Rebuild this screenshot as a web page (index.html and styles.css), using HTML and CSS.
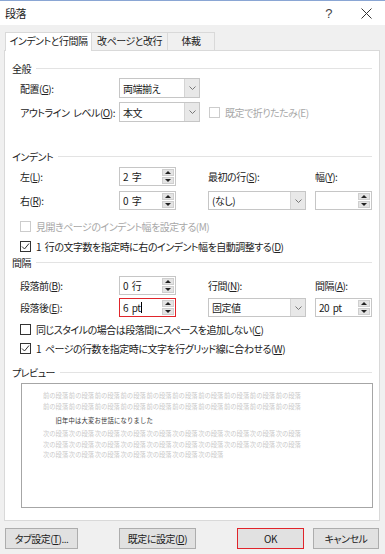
FILE: index.html
```html
<!DOCTYPE html>
<html lang="ja">
<head>
  <meta charset="UTF-8">
  <title>段落</title>
  <link rel="stylesheet" href="styles.css">
</head>
<body>
  <div class="dialog">
    <!-- Title bar -->
    <div class="titlebar">
      <span class="title">段落</span>
      <div class="title-btns">
        <span class="help">?</span>
        <svg class="close" width="11" height="11" viewBox="0 0 11 11"><path d="M0.5 0.5 L10.5 10.5 M10.5 0.5 L0.5 10.5" stroke="#333" stroke-width="1"/></svg>
      </div>
    </div>

    <!-- Tabs -->
    <div class="tabs">
      <div class="tab active">インデントと行間隔</div>
      <div class="tab">改ページと改行</div>
      <div class="tab">体裁</div>
    </div>

    <div class="panel">
      <!-- General -->
      <div class="group-title first"><span>全般</span></div>
      <div class="general">
        <span class="label">配置(<u>G</u>):</span>
        <div class="select short"><span class="value">両端揃え</span><span class="drop"><svg width="7" height="4" viewBox="0 0 7 4"><path d="M0.5 0.5 L3.5 3.5 L6.5 0.5" fill="none" stroke="#777"/></svg></span></div>
        <span></span>
        <span class="label">アウトライン レベル(<u>O</u>):</span>
        <div class="select short"><span class="value">本文</span><span class="drop"><svg width="7" height="4" viewBox="0 0 7 4"><path d="M0.5 0.5 L3.5 3.5 L6.5 0.5" fill="none" stroke="#777"/></svg></span></div>
        <label class="check disabled inline"><span class="box"></span><span>既定で折りたたみ(E)</span></label>
      </div>

      <!-- Indent -->
      <div class="group-title indent-title"><span>インデント</span></div>
      <div class="grid4">
        <span class="label">左(<u>L</u>):</span>
        <div class="spin"><span class="value">2 字</span><span class="arrows"><i class="up"></i><i class="down"></i></span></div>
        <span class="label">最初の行(<u>S</u>):</span>
        <span class="label">幅(<u>Y</u>):</span>

        <span class="label">右(<u>R</u>):</span>
        <div class="spin"><span class="value">0 字</span><span class="arrows"><i class="up"></i><i class="down"></i></span></div>
        <div class="select wide"><span class="value">(なし)</span><span class="drop"><svg width="7" height="4" viewBox="0 0 7 4"><path d="M0.5 0.5 L3.5 3.5 L6.5 0.5" fill="none" stroke="#777"/></svg></span></div>
        <div class="spin"><span class="value"></span><span class="arrows"><i class="up"></i><i class="down"></i></span></div>
      </div>
      <div class="checks indent-checks">
        <label class="check disabled"><span class="box"></span><span>見開きページのインデント幅を設定する(M)</span></label>
        <label class="check"><span class="box checked"><svg width="9" height="9" viewBox="0 0 9 9"><path d="M1 4.5 L3.5 7 L8 1.5" fill="none" stroke="#333" stroke-width="1"/></svg></span><span>1 行の文字数を指定時に右のインデント幅を自動調整する(<u>D</u>)</span></label>
      </div>

      <!-- Spacing -->
      <div class="group-title spacing-title"><span>間隔</span></div>
      <div class="grid4 spacing">
        <span class="label">段落前(<u>B</u>):</span>
        <div class="spin"><span class="value">0 行</span><span class="arrows"><i class="up"></i><i class="down"></i></span></div>
        <span class="label">行間(<u>N</u>):</span>
        <span class="label">間隔(<u>A</u>):</span>

        <span class="label">段落後(<u>E</u>):</span>
        <div class="spin focus"><span class="value">6 pt<span class="caret"></span></span><span class="arrows"><i class="up"></i><i class="down"></i></span></div>
        <div class="select wide"><span class="value">固定値</span><span class="drop"><svg width="7" height="4" viewBox="0 0 7 4"><path d="M0.5 0.5 L3.5 3.5 L6.5 0.5" fill="none" stroke="#777"/></svg></span></div>
        <div class="spin"><span class="value">20 pt</span><span class="arrows"><i class="up"></i><i class="down"></i></span></div>
      </div>
      <div class="checks spacing-checks">
        <label class="check"><span class="box"></span><span>同じスタイルの場合は段落間にスペースを追加しない(<u>C</u>)</span></label>
        <label class="check"><span class="box checked"><svg width="9" height="9" viewBox="0 0 9 9"><path d="M1 4.5 L3.5 7 L8 1.5" fill="none" stroke="#333" stroke-width="1"/></svg></span><span>1 ページの行数を指定時に文字を行グリッド線に合わせる(<u>W</u>)</span></label>
      </div>

      <!-- Preview -->
      <div class="group-title preview-title"><span>プレビュー</span></div>
      <div class="preview">
        <div class="preview-text">
          <p class="ghost">前の段落 前の段落 前の段落 前の段落 前の段落 前の段落 前の段落 前の段落 前の段落 前の段落</p>
          <p class="ghost">前の段落 前の段落 前の段落 前の段落 前の段落 前の段落 前の段落 前の段落 前の段落 前の段落</p>
          <p class="main">旧年中は大変お世話になりました</p>
          <p class="ghost">次の段落 次の段落 次の段落 次の段落 次の段落 次の段落 次の段落 次の段落 次の段落 次の段落</p>
          <p class="ghost">次の段落 次の段落 次の段落 次の段落 次の段落 次の段落 次の段落 次の段落 次の段落 次の段落</p>
          <p class="ghost">次の段落 次の段落 次の段落 次の段落 次の段落 次の段落 次の段落</p>
        </div>
      </div>
    </div>

    <!-- Buttons -->
    <div class="buttons">
      <button class="btn tab-btn">タブ設定(<u>T</u>)...</button>
      <button class="btn default-btn">既定に設定(<u>D</u>)</button>
      <button class="btn ok-btn">OK</button>
      <button class="btn cancel-btn">キャンセル</button>
    </div>
  </div>
</body>
</html>
```

FILE: styles.css
```css
* {
  margin: 0;
  padding: 0;
  box-sizing: border-box;
}

body {
  width: 385px;
  height: 554px;
  overflow: hidden;
  background: #f0f0f0;
  font-family: "Noto Sans CJK JP", "Noto Sans", sans-serif;
  font-feature-settings: "palt";
  font-size: 10px;
  letter-spacing: -0.5px;
  word-spacing: 2px;
  color: #222;
}

u {
  text-decoration: underline;
  text-underline-offset: 1px;
}

.dialog {
  width: 385px;
  height: 554px;
  border-top: 1px solid #8aa6d4;
  background: #f0f0f0;
}

/* Title bar */
.titlebar {
  height: 24px;
  background: #fff;
  display: flex;
  align-items: center;
  justify-content: space-between;
  padding: 0 13px 0 5px;
}

.title {
  font-size: 11px;
}

.title-btns {
  display: flex;
  align-items: center;
  gap: 29px;
}

.help {
  font-family: "Liberation Sans", sans-serif;
  font-size: 13px;
  color: #444;
}

/* Tabs */
.tabs {
  display: flex;
  margin-top: 6px;
  padding-left: 5px;
  height: 19px;
  align-items: flex-end;
}

.tab {
  height: 18px;
  line-height: 16px;
  border: 1px solid #d9d9d9;
  border-bottom: none;
  border-left: none;
  text-align: center;
  white-space: nowrap;
  background: #f0f0f0;
}

.tab.active {
  height: 19px;
  background: #fff;
  border-left: 1px solid #d9d9d9;
  width: 87px;
  margin-bottom: -1px;
  position: relative;
}

.tab:nth-child(2) {
  width: 76px;
}

.tab:nth-child(3) {
  width: 47px;
}

/* Panel */
.panel {
  margin: 0 5px 0 4px;
  height: 471px;
  background: #fff;
  border: 1px solid #d9d9d9;
  padding: 10px 7px 0 15px;
  display: flex;
  flex-direction: column;
}

.group-title {
  display: flex;
  align-items: center;
  height: 14px;
  margin-left: -8px;
}

.group-title::after {
  content: "";
  flex: 1;
  height: 1px;
  background: #e3e3e3;
  margin-left: 5px;
}

.indent-title {
  margin-top: 27px;
}

.spacing-title {
  margin-top: 1px;
}

.preview-title {
  margin-top: 9px;
}

.label {
  align-self: center;
  white-space: nowrap;
}

/* General rows */
.general {
  display: grid;
  grid-template-columns: 99px 81px auto;
  grid-auto-rows: 20px;
  row-gap: 4px;
  margin-top: 3px;
}

/* Four column rows */
.grid4 {
  display: grid;
  grid-template-columns: 99px 89px 107px 57px;
  grid-auto-rows: 19px;
  row-gap: 5px;
  margin-top: 4px;
}

.spacing {
  margin-top: 7px;
  row-gap: 3px;
}

/* Controls */
.select {
  display: flex;
  height: 100%;
  border: 1px solid #c6c6c6;
  background: #fff;
}

.select.short {
  width: 81px;
}

.select.wide {
  width: 98px;
}

.select .value,
.spin .value {
  flex: 1;
  display: flex;
  align-items: center;
  padding-left: 3px;
  white-space: pre;
}

.drop {
  width: 15px;
  border-left: 1px solid #d4d4d4;
  background: #e8e8e8;
  display: flex;
  align-items: center;
  justify-content: center;
}

.spin {
  display: flex;
  width: 57px;
  height: 100%;
  border: 1px solid #c6c6c6;
  background: #fff;
  padding: 1px 1px 1px 0;
}

.spin.focus {
  border-color: #e0252b;
}

.caret {
  display: inline-block;
  width: 1px;
  height: 11px;
  background: #000;
}

.arrows {
  width: 12px;
  display: flex;
  flex-direction: column;
  gap: 1px;
}

.arrows i {
  flex: 1;
  background: #e4e4e4;
  border: 1px solid #cfcfcf;
  display: flex;
  align-items: center;
  justify-content: center;
}

.arrows i::before {
  content: "";
  border-left: 3px solid transparent;
  border-right: 3px solid transparent;
}

.arrows .up::before {
  border-bottom: 3px solid #222;
}

.arrows .down::before {
  border-top: 3px solid #222;
}

/* Checkboxes */
.checks {
  display: flex;
  flex-direction: column;
  gap: 4px;
}

.indent-checks {
  margin-top: 8px;
}

.spacing-checks {
  margin-top: 4px;
  gap: 3px;
}

.check {
  display: flex;
  align-items: center;
  height: 16px;
  gap: 5px;
  white-space: nowrap;
}

.check.inline {
  margin-left: 9px;
  height: auto;
}

.box {
  width: 11px;
  height: 11px;
  border: 1px solid #333;
  background: #fff;
  display: flex;
  align-items: center;
  justify-content: center;
  flex: none;
}

.check.disabled {
  color: #a8a8a8;
}

.check.disabled .box {
  border-color: #cccccc;
}

/* Preview */
.preview {
  margin-top: 4px;
  margin-left: 1px;
  width: 352px;
  height: 125px;
  border: 1px solid #a6a6a6;
  padding: 6px 0 0 21px;
  overflow: hidden;
}

.preview-text {
  font-size: 10px;
  font-feature-settings: normal;
  letter-spacing: 0;
  word-spacing: 0;
  line-height: 17px;
  white-space: nowrap;
  transform: scale(0.63);
  transform-origin: top left;
}

.preview .ghost {
  color: #c9c9c9;
  word-spacing: -1.2px;
}

.preview .main {
  color: #333;
  margin: 6px 0 3px 20px;
  letter-spacing: 0.3px;
}

/* Buttons */
.buttons {
  display: flex;
  margin-top: 7px;
  padding-left: 5px;
  height: 21px;
}

.btn {
  height: 21px;
  font-family: inherit;
  font-feature-settings: "palt";
  font-size: 10px;
  letter-spacing: -0.5px;
  color: #222;
  background: #e1e1e1;
  border: 1px solid #adadad;
}

.tab-btn {
  width: 73px;
}

.default-btn {
  width: 77px;
  margin-left: 41px;
}

.ok-btn {
  width: 67px;
  margin-left: 41px;
  border-color: #e0252b;
}

.cancel-btn {
  width: 66px;
  margin-left: 9px;
}
```
